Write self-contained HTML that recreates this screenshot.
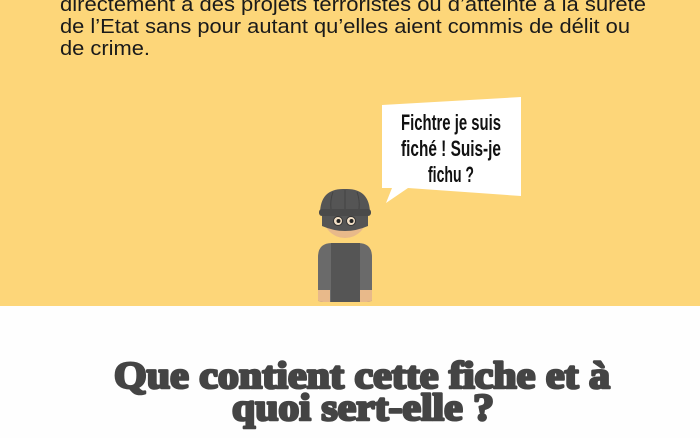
<!DOCTYPE html>
<html><head><meta charset="utf-8"><style>
html,body{margin:0;padding:0;width:700px;height:438px;overflow:hidden;background:#fff}
svg{display:block}
</style></head><body>
<svg width="700" height="438" viewBox="0 0 700 438" xmlns="http://www.w3.org/2000/svg">
<rect x="0" y="0" width="700" height="306" fill="#FDD679"/>
<rect x="0" y="306" width="700" height="132" fill="#FEFEFE"/>
<g font-family="Liberation Sans, sans-serif" font-size="20" fill="#1a1a1a">
<text x="60" y="11" textLength="586" lengthAdjust="spacingAndGlyphs">directement à des projets terroristes ou d’atteinte à la sûreté</text>
<text x="60" y="33" textLength="570" lengthAdjust="spacingAndGlyphs">de l’Etat sans pour autant qu’elles aient commis de délit ou</text>
<text x="60" y="55" textLength="90" lengthAdjust="spacingAndGlyphs">de crime.</text>
</g>
<polygon points="382,105 521,97 521,196 408,188 386,203 392,188 382,188" fill="#fff"/>
<g font-family="Liberation Sans Narrow, Liberation Sans, sans-serif" font-weight="bold" font-size="22" fill="#111" text-anchor="middle">
<text x="451" y="130" textLength="100" lengthAdjust="spacingAndGlyphs">Fichtre je suis</text>
<text x="451" y="156" textLength="100" lengthAdjust="spacingAndGlyphs">fiché ! Suis-je</text>
<text x="451" y="182" textLength="46" lengthAdjust="spacingAndGlyphs">fichu ?</text>
</g>
<!-- thief -->
<circle cx="345" cy="216" r="22" fill="#E8B98A"/>
<path d="M322,214 Q345,205 368,214 L368,226 Q345,236 322,226 Z" fill="#555"/>
<path d="M320,214 Q320,188 345,189 Q370,188 370,214 Z" fill="#555"/>
<rect x="319" y="209" width="52" height="7" rx="3" fill="#4a4a4a"/>
<path d="M333,192 Q330,200 331,209 M345,190 V209 M357,192 Q360,200 359,209" stroke="#444" stroke-width="1" fill="none"/>
<circle cx="338" cy="221" r="4.5" fill="#f2dfc6" stroke="#333" stroke-width="1"/>
<circle cx="351" cy="221" r="4.5" fill="#f2dfc6" stroke="#333" stroke-width="1"/>
<circle cx="338.5" cy="221" r="2" fill="#222"/>
<circle cx="351.5" cy="221" r="2" fill="#222"/>
<path d="M318,300 V257 Q318,243 332,243 H358 Q372,243 372,257 V300 Q372,302 365,302 H325 Q318,302 318,300 Z" fill="#6a6a6a"/>
<path d="M318,290 V300 Q318,302 325,302 H330 V290 Z M372,290 V300 Q372,302 365,302 H360 V290 Z" fill="#E8B98A"/>
<rect x="331" y="243" width="29" height="59" fill="#555"/>
<g font-family="Liberation Serif, serif" font-weight="bold" font-size="38" fill="#444" stroke="#444" stroke-width="2.6" stroke-linejoin="round" text-anchor="middle">
<text x="362" y="388" textLength="496" lengthAdjust="spacingAndGlyphs">Que contient cette fiche et à</text>
<text x="363" y="420" textLength="262" lengthAdjust="spacingAndGlyphs">quoi sert-elle ?</text>
</g>
</svg>
</body></html>
